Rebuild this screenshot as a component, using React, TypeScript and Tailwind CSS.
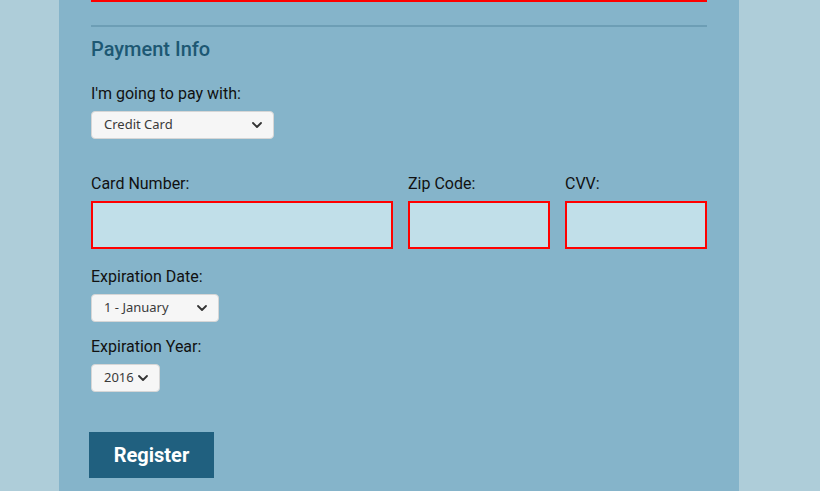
import React from 'react';
import { ChevronDown } from 'lucide-react';

const Select = ({ value, options, width }: { value: string; options: string[]; width: string }) => (
  <div className={`relative mt-2 ${width}`}>
    <select
      defaultValue={value}
      className="h-[28px] w-full appearance-none rounded-[4px] border border-[#d6d6d6] bg-[#f6f6f6] pl-3 pr-[18px] font-['Noto_Sans',sans-serif] text-[13px] text-[#3a3a3a] outline-none"
    >
      {options.map((o) => (
        <option key={o}>{o}</option>
      ))}
    </select>
    <ChevronDown
      className="pointer-events-none absolute right-[9px] top-[6px] h-4 w-4 text-[#333]"
      strokeWidth={2.75}
    />
  </div>
);

const Field = ({ label }: { label: string }) => (
  <div>
    <label className="block text-[16px] leading-[19px] text-[#111]">{label}</label>
    <input
      type="text"
      className="mt-2 block h-[48px] w-full border-2 border-[#ff0000] bg-[#c1dfe9] px-2 outline-none"
    />
  </div>
);

const App = () => {
  return (
    <div className="min-h-screen bg-[#aecdd9] font-['Roboto',sans-serif]">
      <div className="ml-[59px] w-[680px] bg-[#85b4ca] px-[32px] pb-[14px]">
        {/* bottom edge of the previous input */}
        <div className="h-[2px] bg-[#ff0000]" />

        <hr className="mt-[23px] border-0 border-t-2 border-[#6d9eb5]" />
        <h2 className="mt-[10px] text-[20px] font-medium leading-[24px] text-[#1d5873]">Payment Info</h2>

        <div className="mt-[23px]">
          <label className="block text-[16px] leading-[19px] text-[#111]">I'm going to pay with:</label>
          <Select value="Credit Card" options={['Credit Card', 'Bitcoin']} width="w-[183px]" />
        </div>

        <div className="mt-[35px] grid grid-cols-[302px_142px_142px] gap-x-[15px]">
          <Field label="Card Number:" />
          <Field label="Zip Code:" />
          <Field label="CVV:" />
        </div>

        <div className="mt-[18px]">
          <label className="block text-[16px] leading-[19px] text-[#111]">Expiration Date:</label>
          <Select
            value="1 - January"
            options={['1 - January', '2 - February', '3 - March', '4 - April', '5 - May', '6 - June']}
            width="w-[128px]"
          />
        </div>

        <div className="mt-[15px]">
          <label className="block text-[16px] leading-[19px] text-[#111]">Expiration Year:</label>
          <Select value="2016" options={['2016', '2017', '2018', '2019', '2020']} width="w-[69px]" />
        </div>

        <button className="-ml-[2px] mt-[40px] h-[46px] w-[125px] bg-[#20607f] text-[20px] font-bold text-white">
          Register
        </button>
      </div>
    </div>
  );
};

export default App;
